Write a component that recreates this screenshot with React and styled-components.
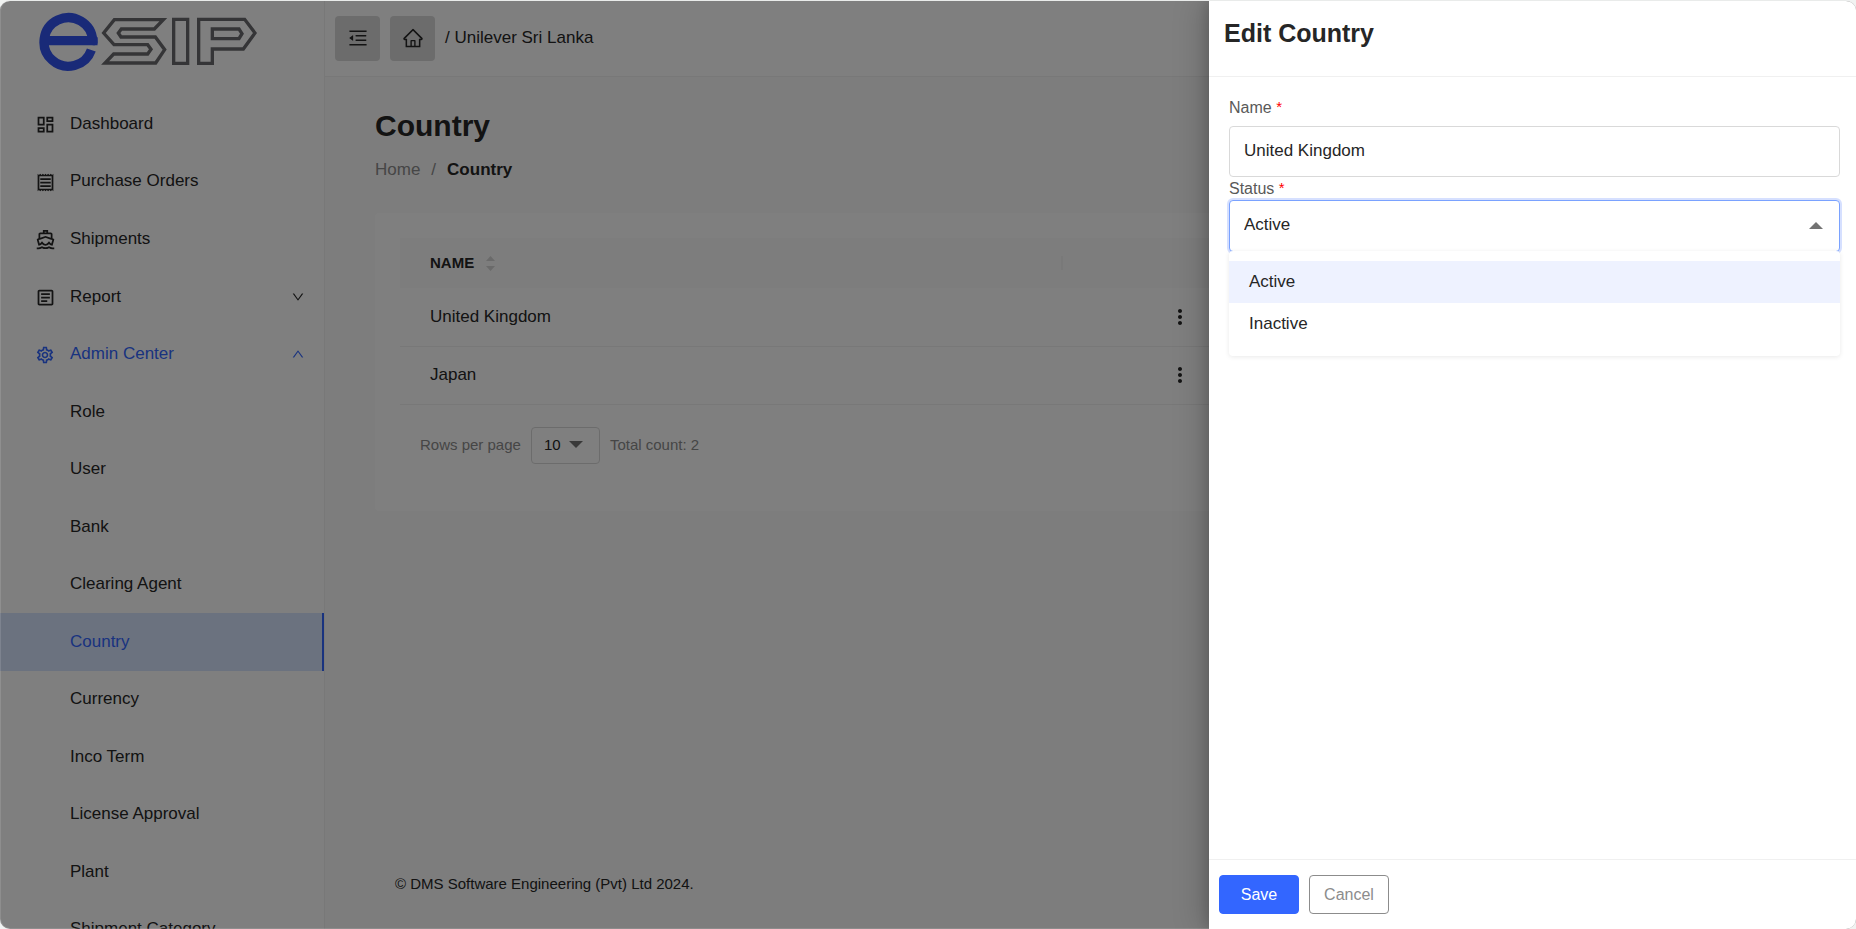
import React, { useState } from "react";
import styled, { createGlobalStyle, css } from "styled-components";
import {
  MdOutlineDashboard,
  MdOutlineReceipt,
  MdOutlineDirectionsBoat,
  MdOutlineArticle,
  MdOutlineSettings,
  MdMoreVert,
} from "react-icons/md";
import {
  AiOutlineMenuFold,
  AiOutlineHome,
  AiOutlineDown,
  AiOutlineUp,
} from "react-icons/ai";

const GlobalStyle = createGlobalStyle`
  *, *::before, *::after { box-sizing: border-box; }
  body {
    margin: 0;
    background: #f1f3f2;
    color: #262626;
    font-family: "Liberation Sans", Arial, sans-serif;
    font-size: 17px;
    line-height: 24px;
  }
  button, input, select { font: inherit; color: inherit; }
  ul { list-style: none; margin: 0; padding: 0; }
  a { color: inherit; text-decoration: none; }
`;

const Frame = styled.div`
  position: relative;
  display: flex;
  height: 100vh;
  border-top: 1px solid #e9ebea;
  border-radius: 10px;
  overflow: hidden;
  background: #fafafa;

  &::after {
    content: "";
    position: absolute;
    inset: 0;
    border: 1px solid rgba(255, 255, 255, 0.12);
    border-top: 0;
    border-radius: 10px;
    pointer-events: none;
  }
`;

/* Sidebar */

const Sidebar = styled.aside`
  flex: 0 0 325px;
  border-right: 1px solid #f0f0f0;
  background: #fff;
  overflow: hidden;
`;

const Brand = styled.a`
  display: block;
  height: 94px;
  padding: 11px 39px;

  svg { display: block; }
`;

const MenuList = styled.ul`
  display: grid;
  grid-auto-rows: 1fr;
  height: ${(p) => (p.$nested ? "575px" : "288px")};
`;

const MenuLink = styled.a`
  display: flex;
  align-items: center;
  gap: 15px;
  height: 100%;
  padding: 0 19px 0 ${(p) => (p.$nested ? "70px" : "35px")};
  color: ${(p) => (p.$active ? "#3366ff" : "#262626")};
  ${(p) =>
    p.$selected &&
    css`
      color: #3366ff;
      background: #d6e4ff;
      border-right: 2px solid #3366ff;
    `}
`;

const MenuIcon = styled.span`
  display: flex;
  justify-content: center;
  width: 20px;
  padding-top: 2px;

  svg { flex: none; }
`;

const MenuLabel = styled.span`
  flex: 1;
  white-space: nowrap;
`;

/* Main area */

const Main = styled.div`
  flex: 1;
  display: flex;
  flex-direction: column;
  min-width: 0;
`;

const TopBar = styled.header`
  display: flex;
  align-items: center;
  gap: 10px;
  height: 76px;
  padding: 11px 10px 12px;
  border-bottom: 1px solid #f0f0f0;
  background: #fff;
`;

const ToolButton = styled.button`
  display: flex;
  align-items: center;
  justify-content: center;
  width: 45px;
  height: 45px;
  padding: 0;
  border: 0;
  border-radius: 4px;
  background: #d9d9d9;
`;

const Content = styled.main`
  flex: 1;
  padding: 32px 50px;
`;

const PageTitle = styled.h1`
  margin: 0;
  font-size: 30px;
  line-height: 34px;
`;

const Crumbs = styled.nav`
  display: flex;
  gap: 11px;
  margin: 15px 0 31px;
  color: #8c8c8c;

  strong { color: #262626; }
`;

const Card = styled.section`
  padding: 25px 25px 47px;
  border-radius: 4px;
  background: #fff;
`;

const Table = styled.table`
  width: 100%;
  border-collapse: collapse;
  table-layout: fixed;

  th, td {
    padding: 0 0 0 30px;
    text-align: left;
  }
  th {
    height: 50px;
    background: #fafafa;
    font-size: 15px;
  }
  td {
    height: 58px;
    border-bottom: 1px solid #f0f0f0;
  }
`;

const HeadCell = styled.div`
  display: flex;
  align-items: center;
  gap: 12px;
  height: 14px;
  ${(p) => p.$divided && "border-right: 2px solid #f2f2f2;"}
`;

const ActionCell = styled.td`
  && {
    padding: 0;
    text-align: center;
  }
`;

const RowMenu = styled.button`
  display: inline-flex;
  padding: 0;
  border: 0;
  background: none;
  vertical-align: middle;
`;

const Pager = styled.div`
  display: flex;
  align-items: center;
  gap: 10px;
  margin-top: 22px;
  padding-left: 20px;
  color: #8c8c8c;
  font-size: 15px;
`;

const PageSizeLabel = styled.label`
  display: flex;
  align-items: center;
  gap: 10px;
`;

const SelectBox = styled.span`
  position: relative;
  display: block;

  svg {
    position: absolute;
    top: 50%;
    right: 17px;
    margin-top: -4px;
    pointer-events: none;
  }
`;

const PageSize = styled.select`
  display: block;
  width: 69px;
  height: 37px;
  padding: 0 12px;
  appearance: none;
  border: 1px solid #d9d9d9;
  border-radius: 4px;
  background: #fff;
  color: #262626;
`;

const PageFooter = styled.footer`
  padding: 0 70px 33px;
  font-size: 15px;
`;

/* Drawer */

const Mask = styled.div`
  position: absolute;
  inset: 0;
  display: flex;
  justify-content: flex-end;
  background: rgba(0, 0, 0, 0.5);
`;

const Drawer = styled.section`
  display: flex;
  flex-direction: column;
  width: 647px;
  max-width: 100%;
  background: #fff;
  box-shadow: -3px 0 10px rgba(0, 0, 0, 0.12), -9px 0 28px rgba(0, 0, 0, 0.16);
`;

const DrawerHeader = styled.header`
  height: 76px;
  padding: 16px 15px;
  border-bottom: 1px solid #f0f0f0;
`;

const DrawerTitle = styled.h2`
  margin: 0;
  font-size: 25px;
  line-height: 32px;
`;

const DrawerBody = styled.form`
  flex: 1;
  padding: 19px 16px 19px 20px;
`;

const Label = styled.label`
  display: block;
  padding-bottom: ${(p) => (p.$tight ? "0" : "7px")};
  color: #595959;
  font-size: 16px;
  line-height: 23px;

  span {
    color: #ff0000;
    font-size: 15px;
    line-height: 15px;
    vertical-align: 1px;
  }
`;

const fieldBox = css`
  display: block;
  width: 100%;
  height: 51px;
  padding: 0 14px 2px;
  border: 1px solid #d9d9d9;
  border-radius: 4px;
  background: #fff;
  outline: 0;
`;

const TextInput = styled.input`
  ${fieldBox}
`;

const StatusSelect = styled.select`
  ${fieldBox}
  height: 52px;
  appearance: none;
  border-color: #7aa2ff;
  box-shadow: 0 0 0 2px rgba(51, 102, 255, 0.2);
`;

const OptionMenu = styled.ul`
  position: absolute;
  z-index: 1;
  top: calc(100% - 1px);
  left: 0;
  right: 0;
  padding: 10px 0 11px;
  border-radius: 4px;
  background: #fff;
  box-shadow: 0 1px 5px rgba(0, 0, 0, 0.09);
`;

const OptionItem = styled.li`
  height: 42px;
  padding: 0 20px;
  line-height: 42px;
  background: ${(p) => (p.$selected ? "#eef2ff" : "#fff")};
`;

const DrawerFooter = styled.footer`
  display: flex;
  gap: 10px;
  padding: 15px 10px;
  border-top: 1px solid #f0f0f0;
`;

const ActionButton = styled.button`
  width: 80px;
  height: 39px;
  padding: 0;
  border: 1px solid ${(p) => (p.$primary ? "#3366ff" : "#8c8c8c")};
  border-radius: 4px;
  background: ${(p) => (p.$primary ? "#3366ff" : "#fff")};
  color: ${(p) => (p.$primary ? "#fff" : "#8c8c8c")};
  font-size: 16px;
`;

const Caret = ({ up, color = "#737373" }) => (
  <svg width="14" height="7" viewBox="0 0 14 7" aria-hidden="true">
    <path d={up ? "M0 7 7 0l7 7z" : "M0 0h14L7 7z"} fill={color} />
  </svg>
);

const SortMark = () => (
  <svg width="9" height="15" viewBox="0 0 18 30" aria-hidden="true">
    <path d="M0 10 9 0l9 10zM0 20h18l-9 10z" fill="#d4d4d4" />
  </svg>
);

const Logo = () => (
  <svg width="218" height="60" viewBox="117 36 654 180" role="img" aria-label="eSIP" fill="none">
    <path d="M133 122H278A73 73 0 1 0 274 150" stroke="#3355f0" strokeWidth="28" />
    <path d="M278 136q14 0 15-8v-16h-20z" fill="#3355f0" />
    <g stroke="#6a6a6e" strokeWidth="10">
      <path d="M490 59H343L311 99l31 35h101l10 14-10 14H341L315 189H467L494 149 466 111H363L355 99 364 87H463z" />
      <path d="M521 58H563V190H521z" />
      <path d="M596 58H734L765 99 730 147H637V190H596z" />
      <path d="M637 87H717L726 101 717 116H637z" />
    </g>
  </svg>
);

const MENU = [
  { label: "Dashboard", icon: <MdOutlineDashboard size={21} /> },
  { label: "Purchase Orders", icon: <MdOutlineReceipt size={21} /> },
  { label: "Shipments", icon: <MdOutlineDirectionsBoat size={21} /> },
  { label: "Report", icon: <MdOutlineArticle size={21} />, arrow: <AiOutlineDown size={14} /> },
  {
    label: "Admin Center",
    icon: <MdOutlineSettings size={20} />,
    arrow: <AiOutlineUp size={14} />,
    active: true,
  },
];

const ADMIN_MENU = [
  "Role",
  "User",
  "Bank",
  "Clearing Agent",
  "Country",
  "Currency",
  "Inco Term",
  "License Approval",
  "Plant",
  "Shipment Category",
];

const COUNTRIES = ["United Kingdom", "Japan"];
const STATUSES = ["Active", "Inactive"];

export default function App() {
  const [name, setName] = useState("United Kingdom");
  const [status, setStatus] = useState("Active");

  return (
    <Frame>
      <GlobalStyle />
      <Sidebar>
        <Brand href="#home">
          <Logo />
        </Brand>
        <nav aria-label="Main">
          <MenuList>
            {MENU.map((item) => (
              <li key={item.label}>
                <MenuLink href="#menu" $active={item.active}>
                  <MenuIcon>{item.icon}</MenuIcon>
                  <MenuLabel>{item.label}</MenuLabel>
                  {item.arrow}
                </MenuLink>
              </li>
            ))}
          </MenuList>
          <MenuList $nested>
            {ADMIN_MENU.map((label) => (
              <li key={label}>
                <MenuLink href="#admin" $nested $selected={label === "Country"}>
                  <MenuLabel>{label}</MenuLabel>
                </MenuLink>
              </li>
            ))}
          </MenuList>
        </nav>
      </Sidebar>

      <Main>
        <TopBar>
          <ToolButton type="button" aria-label="Collapse menu">
            <AiOutlineMenuFold size={22} />
          </ToolButton>
          <ToolButton type="button" aria-label="Home">
            <AiOutlineHome size={22} />
          </ToolButton>
          <span>/ Unilever Sri Lanka</span>
        </TopBar>

        <Content>
          <PageTitle>Country</PageTitle>
          <Crumbs aria-label="Breadcrumb">
            <a href="#home">Home</a>
            <span>/</span>
            <strong>Country</strong>
          </Crumbs>
          <Card>
            <Table>
              <colgroup>
                <col width="48%" />
                <col width="17%" />
                <col />
              </colgroup>
              <thead>
                <tr>
                  <th>
                    <HeadCell $divided>
                      NAME
                      <SortMark />
                    </HeadCell>
                  </th>
                  <th aria-label="Actions" />
                  <th aria-hidden="true" />
                </tr>
              </thead>
              <tbody>
                {COUNTRIES.map((country) => (
                  <tr key={country}>
                    <td>{country}</td>
                    <ActionCell>
                      <RowMenu type="button" aria-label={`Actions for ${country}`}>
                        <MdMoreVert size={24} />
                      </RowMenu>
                    </ActionCell>
                    <td />
                  </tr>
                ))}
              </tbody>
            </Table>
            <Pager>
              <PageSizeLabel>
                Rows per page
                <SelectBox>
                  <PageSize defaultValue="10">
                    <option>10</option>
                    <option>25</option>
                  </PageSize>
                  <Caret />
                </SelectBox>
              </PageSizeLabel>
              <span>Total count: 2</span>
            </Pager>
          </Card>
        </Content>
        <PageFooter>© DMS Software Engineering (Pvt) Ltd 2024.</PageFooter>
      </Main>

      <Mask>
        <Drawer role="dialog" aria-labelledby="drawer-title">
          <DrawerHeader>
            <DrawerTitle id="drawer-title">Edit Country</DrawerTitle>
          </DrawerHeader>
          <DrawerBody id="country-form" onSubmit={(e) => e.preventDefault()}>
            <Label htmlFor="country-name">
              Name <span>*</span>
            </Label>
            <TextInput
              id="country-name"
              value={name}
              onChange={(e) => setName(e.target.value)}
            />
            <Label htmlFor="country-status" $tight>
              Status <span>*</span>
            </Label>
            <SelectBox>
              <StatusSelect
                id="country-status"
                value={status}
                onChange={(e) => setStatus(e.target.value)}
              >
                {STATUSES.map((s) => (
                  <option key={s}>{s}</option>
                ))}
              </StatusSelect>
              <Caret up />
              <OptionMenu role="listbox" aria-label="Status">
                {STATUSES.map((s) => (
                  <OptionItem
                    key={s}
                    role="option"
                    aria-selected={s === status}
                    $selected={s === status}
                    onClick={() => setStatus(s)}
                  >
                    {s}
                  </OptionItem>
                ))}
              </OptionMenu>
            </SelectBox>
          </DrawerBody>
          <DrawerFooter>
            <ActionButton type="submit" form="country-form" $primary>
              Save
            </ActionButton>
            <ActionButton type="button">Cancel</ActionButton>
          </DrawerFooter>
        </Drawer>
      </Mask>
    </Frame>
  );
}
